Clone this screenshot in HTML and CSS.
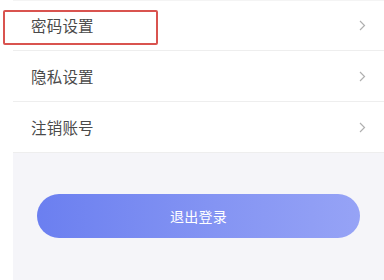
FILE: index.html
```html
<!DOCTYPE html>
<html lang="zh">
<head>
<meta charset="utf-8">
<link rel="stylesheet" href="styles.css">
</head>
<body>
<div class="page">
  <ul class="menu">
    <li class="row"><span class="label">密码设置</span><svg class="chev" width="7" height="11" viewBox="0 0 7 11"><path d="M1 1 L5.5 5.5 L1 10" fill="none" stroke="#b0b0b0" stroke-width="1.2"/></svg></li>
    <li class="row"><span class="label">隐私设置</span><svg class="chev" width="7" height="11" viewBox="0 0 7 11"><path d="M1 1 L5.5 5.5 L1 10" fill="none" stroke="#b0b0b0" stroke-width="1.2"/></svg></li>
    <li class="row"><span class="label">注销账号</span><svg class="chev" width="7" height="11" viewBox="0 0 7 11"><path d="M1 1 L5.5 5.5 L1 10" fill="none" stroke="#b0b0b0" stroke-width="1.2"/></svg></li>
  </ul>
  <div class="panel">
    <button class="logout">退出登录</button>
  </div>
  <div class="highlight"></div>
</div>
</body>
</html>
```
FILE: styles.css
```css
html, body {
  margin: 0;
  padding: 0;
  background: #ffffff;
}
body {
  font-family: "Noto Sans CJK SC", "Noto Sans", sans-serif;
  width: 384px;
  height: 280px;
  overflow: hidden;
}
.page {
  position: relative;
  width: 384px;
  height: 280px;
  display: flex;
  flex-direction: column;
}
.menu {
  list-style: none;
  margin: 0 0 0 13px;
  padding: 0;
  box-shadow: inset 0 1px 0 #f4f4f4;
}
.row {
  height: 50px;
  border-bottom: 1px solid #eeeeee;
  display: flex;
  align-items: center;
  justify-content: space-between;
  padding: 0 18px 0 18px;
}
.label {
  font-size: 15.5px;
  color: #4a4a4a;
  letter-spacing: 0.2px;
}
.chev {
  display: block;
}
.panel {
  flex: 1;
  margin-left: 13px;
  background: #f5f5f9;
  padding: 41px 24px 0 24px;
}
.logout {
  display: block;
  width: 100%;
  height: 44px;
  border: none;
  border-radius: 22px;
  background: linear-gradient(90deg, #6b7ff0 0%, #8494f3 55%, #96a3f6 100%);
  color: #ffffff;
  font-family: "Noto Sans CJK SC", "Noto Sans", sans-serif;
  font-size: 14px;
  letter-spacing: 0.3px;
  padding: 0;
}
.highlight {
  position: absolute;
  left: 3px;
  top: 10px;
  width: 151px;
  height: 31px;
  border: 2px solid #d9534f;
  border-radius: 2px;
}
```
